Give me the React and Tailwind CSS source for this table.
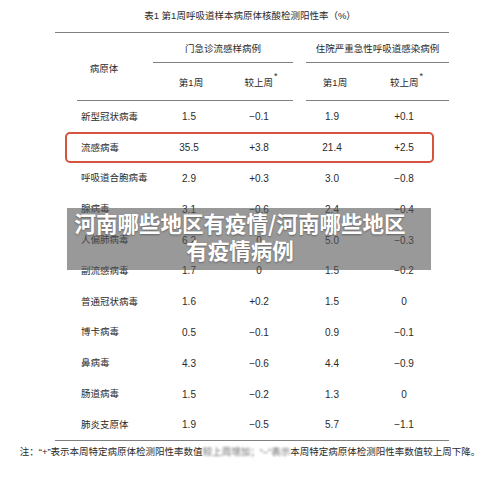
import React from 'react';

const rows = [
  ['新型冠状病毒', '1.5', '−0.1', '1.9', '+0.1'],
  ['流感病毒', '35.5', '+3.8', '21.4', '+2.5'],
  ['呼吸道合胞病毒', '2.9', '+0.3', '3.0', '−0.8'],
  ['腺病毒', '3.1', '−0.6', '2.4', '−0.4'],
  ['人偏肺病毒', '6.2', '0', '5.0', '−0.3'],
  ['副流感病毒', '1.7', '0', '1.5', '−0.2'],
  ['普通冠状病毒', '1.6', '+0.2', '1.5', '0'],
  ['博卡病毒', '0.5', '−0.1', '0.9', '−0.1'],
  ['鼻病毒', '4.3', '−0.6', '4.4', '−0.9'],
  ['肠道病毒', '1.5', '−0.2', '1.3', '0'],
  ['肺炎支原体', '1.9', '−0.5', '5.7', '−1.1'],
];

function App() {
  return (
    <div className="relative w-[500px] h-[479px] overflow-hidden bg-white text-[#2a2a2a] font-['Liberation_Sans','Noto_Sans_CJK_SC',sans-serif] text-[9.5px]">
      {/* 标题 */}
      <div className="h-[32px] flex items-center justify-center text-[9.5px]">
        表1 第1周呼吸道样本病原体核酸检测阳性率（%）
      </div>
      <div className="ml-[55px] w-[394px] h-px bg-[#808080]"></div>

      {/* 表头 */}
      <div className="ml-[55px] flex h-[67px]">
        <div className="w-[98px] flex items-center justify-center pt-[5px]">病原体</div>
        <div className="w-[140px] flex flex-col">
          <div className="h-[29px] flex items-center justify-center pt-[3px]">门急诊流感样病例</div>
          <div className="h-px bg-[#808080]"></div>
          <div className="flex-1 flex pt-[3px]">
            <div className="w-[76px] flex items-center justify-center">第1周</div>
            <div className="w-[64px] flex items-center justify-center">
              较上周<span className="relative -top-[6px] text-[9px] ml-[1px]">*</span>
            </div>
          </div>
        </div>
        <div className="w-[13px]"></div>
        <div className="w-[143px] flex flex-col">
          <div className="h-[29px] flex items-center justify-center pt-[3px]">住院严重急性呼吸道感染病例</div>
          <div className="h-px bg-[#808080]"></div>
          <div className="flex-1 flex pt-[3px]">
            <div className="w-[58px] flex items-center justify-center">第1周</div>
            <div className="w-[85px] flex items-center justify-center">
              较上周<span className="relative -top-[6px] text-[9px] ml-[1px]">*</span>
            </div>
          </div>
        </div>
      </div>
      <div className="flex">
        <div className="ml-[77px] w-[216px] h-px bg-[#808080]"></div>
        <div className="ml-[13px] w-[143px] h-px bg-[#808080]"></div>
      </div>

      {/* 数据行 */}
      <div className="pt-[0.5px]">
        {rows.map((r, i) => (
          <div
            key={r[0]}
            className={
              'ml-[65px] w-[369px] h-[30.8px] rounded-[5px] border-2 grid grid-cols-[87px_70px_70px_76px_68px] items-center ' +
              (i === 1 ? 'border-[#d6533f]' : 'border-transparent')
            }
          >
            <div className="pl-[14px] whitespace-nowrap">{r[0]}</div>
            <div className="text-center text-[10px]">{r[1]}</div>
            <div className="text-center text-[10px]">{r[2]}</div>
            <div className="text-center text-[10px]">{r[3]}</div>
            <div className="text-center text-[10px]">{r[4]}</div>
          </div>
        ))}
      </div>
      <div className="ml-[55px] w-[394px] h-px bg-[#808080]"></div>

      {/* 注释 */}
      <div className="h-[22px] flex items-center justify-center whitespace-nowrap text-[9.5px]">
        注：“+”表示本周特定病原体检测阳性率数值
        <span className="blur-[0.8px] opacity-70">较上周增加；“–”表示</span>
        本周特定病原体检测阳性率数值较上周下降。
      </div>

      {/* 标题遮罩 */}
      <div className="absolute left-[67px] top-[208px] w-[364px] h-[62px] bg-[rgba(85,85,85,0.6)] pl-[6px] pr-[24px] pt-[1px] text-center text-white font-bold text-[21.5px] leading-[27px] font-['Noto_Sans_CJK_SC',sans-serif] [text-shadow:0_1px_2px_rgba(0,0,0,0.35)]">
        河南哪些地区有疫情/河南哪些地区有疫情病例
      </div>
    </div>
  );
}

export default App;
